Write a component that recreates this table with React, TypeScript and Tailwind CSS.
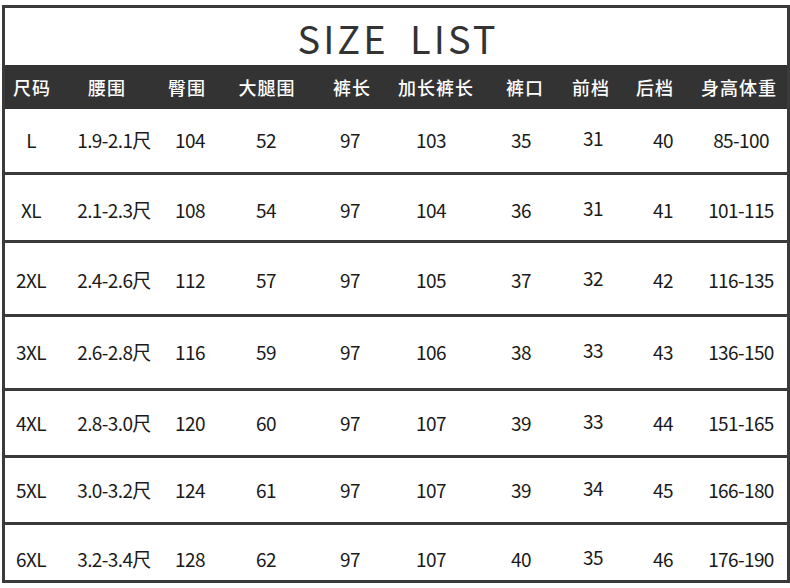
const HEADERS = ["尺码", "腰围", "臀围", "大腿围", "裤长", "加长裤长", "裤口", "前档", "后档", "身高体重"];

const ROWS = [
  { h: "h-[63px]", pt: "pt-0", cells: ["L", "1.9-2.1尺", "104", "52", "97", "103", "35", "31", "40", "85-100"] },
  { h: "h-[65px]", pt: "pt-[5px]", cells: ["XL", "2.1-2.3尺", "108", "54", "97", "104", "36", "31", "41", "101-115"] },
  { h: "h-[71px]", pt: "pt-[3px]", cells: ["2XL", "2.4-2.6尺", "112", "57", "97", "105", "37", "32", "42", "116-135"] },
  { h: "h-[71px]", pt: "pt-0", cells: ["3XL", "2.6-2.8尺", "116", "59", "97", "106", "38", "33", "43", "136-150"] },
  { h: "h-[64px]", pt: "pt-0", cells: ["4XL", "2.8-3.0尺", "120", "60", "97", "107", "39", "33", "44", "151-165"] },
  { h: "h-[64px]", pt: "pt-px", cells: ["5XL", "3.0-3.2尺", "124", "61", "97", "107", "39", "34", "45", "166-180"] },
  { h: "h-[55px]", pt: "pt-[14px]", cells: ["6XL", "3.2-3.4尺", "128", "62", "97", "107", "40", "35", "46", "176-190"] },
];

export default function App() {
  return (
    <div className="w-[790px] h-[588px] bg-white pt-[5px] pl-[2px] font-['Noto_Sans_CJK_SC',sans-serif] text-[#1a1a1a]">
      <div className="w-[788px] border-[3px] border-[#3a3a3a] bg-white">
        {/* title */}
        <div className="h-[57px] flex items-center justify-center pt-[3px] pl-[4px]">
          <span className="text-[38px] font-normal tracking-[3px] [word-spacing:10px] text-[#333] leading-none">SIZE LIST</span>
        </div>

        {/* header bar */}
        <div className="h-[44px] bg-[#333333] text-white grid grid-cols-[54px_96px_64px_96px_74px_94px_84px_48px_80px_88px] items-center text-[18px] font-medium tracking-[1px] leading-none">
          {HEADERS.map((h) => (
            <div key={h} className="flex justify-center whitespace-nowrap">{h}</div>
          ))}
        </div>

        {ROWS.map((row, i) => (
          <div key={row.cells[0]}>
            {i > 0 && <div className="h-[3px] bg-[#3a3a3a]" />}
            <div className={`${row.h} ${row.pt} pb-[2px] grid grid-cols-[52px_114px_38px_114px_54px_108px_72px_72px_68px_88px] items-center text-[19px] tracking-[-0.6px] leading-none`}>
              {row.cells.map((c, j) => (
                <div key={j} className={`flex justify-center whitespace-nowrap ${j === 7 ? "pb-[4px]" : ""}`}>
                  {c}
                </div>
              ))}
            </div>
          </div>
        ))}
      </div>
    </div>
  );
}
